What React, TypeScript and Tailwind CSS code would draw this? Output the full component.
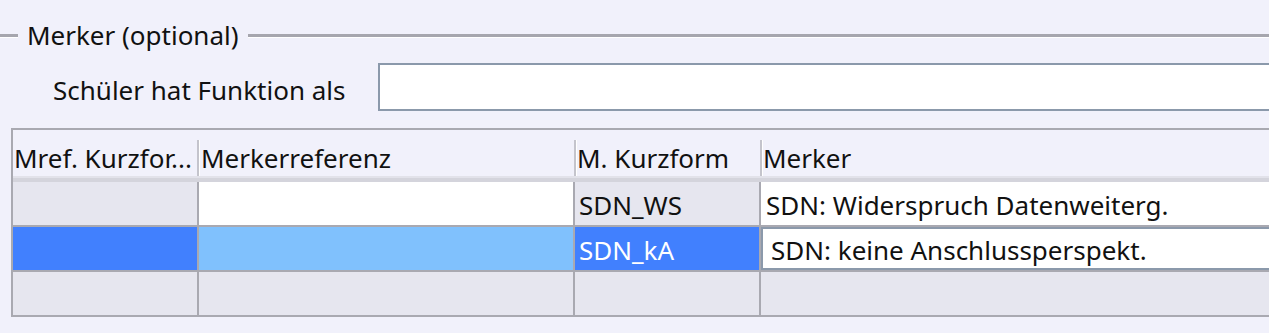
import React from "react";

const font = { fontFamily: '"Noto Sans", "Open Sans", sans-serif' };

export default function App() {
  return (
    <div
      className="w-[1269px] h-[333px] overflow-hidden bg-[#f1f1fb] text-[#111] relative"
      style={font}
    >
      {/* Fieldset legend row */}
      <div className="flex items-center h-[32px] mt-[20px]">
        <div className="w-[18px] h-[3px] bg-[#a6a6ae] border-b border-white box-content" />
        <span className="ml-[9px] mr-[9px] text-[26px] leading-none whitespace-nowrap pb-[2px]">Merker (optional)</span>
        <div className="flex-1 h-[3px] bg-[#a6a6ae] border-b border-white box-content" />
      </div>

      {/* Input row */}
      <div className="flex items-center mt-[11px] h-[48px]">
        <span className="ml-[53px] w-[325px] text-[26px] leading-none whitespace-nowrap pt-[6px]">Schüler hat Funktion als</span>
        <div className="flex-1 h-[48px] bg-white border-2 border-[#8b99ab] border-r-0" />
      </div>

      {/* Table */}
      <div className="ml-[11px] mt-[17px] w-[1300px] border-2 border-[#a9a9b1] border-r-0">
        {/* Header */}
        <div className="flex h-[46px] bg-[#f1f1fb] text-[26px] leading-none">
          <div className="w-[184px] flex items-center pl-[1px] pt-[10px] whitespace-nowrap overflow-hidden">Mref. Kurzfor...</div>
          <div className="w-[3px] flex items-end"><div className="w-[2px] h-[36px] bg-[#c4c4cc] border-r border-white box-content" /></div>
          <div className="w-[374px] flex items-center pl-[1px] pt-[10px] whitespace-nowrap">Merkerreferenz</div>
          <div className="w-[3px] flex items-end"><div className="w-[2px] h-[36px] bg-[#c4c4cc] border-r border-white box-content" /></div>
          <div className="w-[183px] flex items-center pl-[0px] pt-[10px] whitespace-nowrap">M. Kurzform</div>
          <div className="w-[3px] flex items-end"><div className="w-[2px] h-[36px] bg-[#c4c4cc] border-r border-white box-content" /></div>
          <div className="flex-1 flex items-center pl-[0px] pt-[10px] whitespace-nowrap">Merker</div>
        </div>
        <div className="h-[2px] bg-[#e2e2ea]" />
        <div className="h-[4px] bg-[#d4d4dc]" />

        {/* Body */}
        <div className="grid grid-cols-[184px_374px_184px_1fr] gap-x-[2px] gap-y-[2px] bg-[#a9a9b1] text-[26px] leading-none">
          <div className="h-[43px] bg-[#e6e6ef]" />
          <div className="h-[43px] bg-white" />
          <div className="h-[43px] bg-[#e6e6ef] flex items-center pl-[4px] pt-[2px]">SDN_WS</div>
          <div className="h-[43px] bg-white flex items-center pl-[5px] pt-[2px] whitespace-nowrap">SDN: Widerspruch Datenweiterg.</div>

          <div className="h-[43px] bg-[#4180fe]" />
          <div className="h-[43px] bg-[#80c1fd]" />
          <div className="h-[43px] bg-[#4180fe] text-white flex items-center pl-[4px] pt-[2px]">SDN_kA</div>
          <div className="h-[43px] bg-[#8b99ab] pl-[2px]">
            <div className="h-[43px] bg-white border-y-2 border-[#8b99ab] flex items-center pl-[8px] pt-[2px] whitespace-nowrap">SDN: keine Anschlussperspekt.</div>
          </div>

          <div className="h-[43px] bg-[#e6e6ef]" />
          <div className="h-[43px] bg-[#e6e6ef]" />
          <div className="h-[43px] bg-[#e6e6ef]" />
          <div className="h-[43px] bg-[#e6e6ef]" />
        </div>
      </div>
    </div>
  );
}
